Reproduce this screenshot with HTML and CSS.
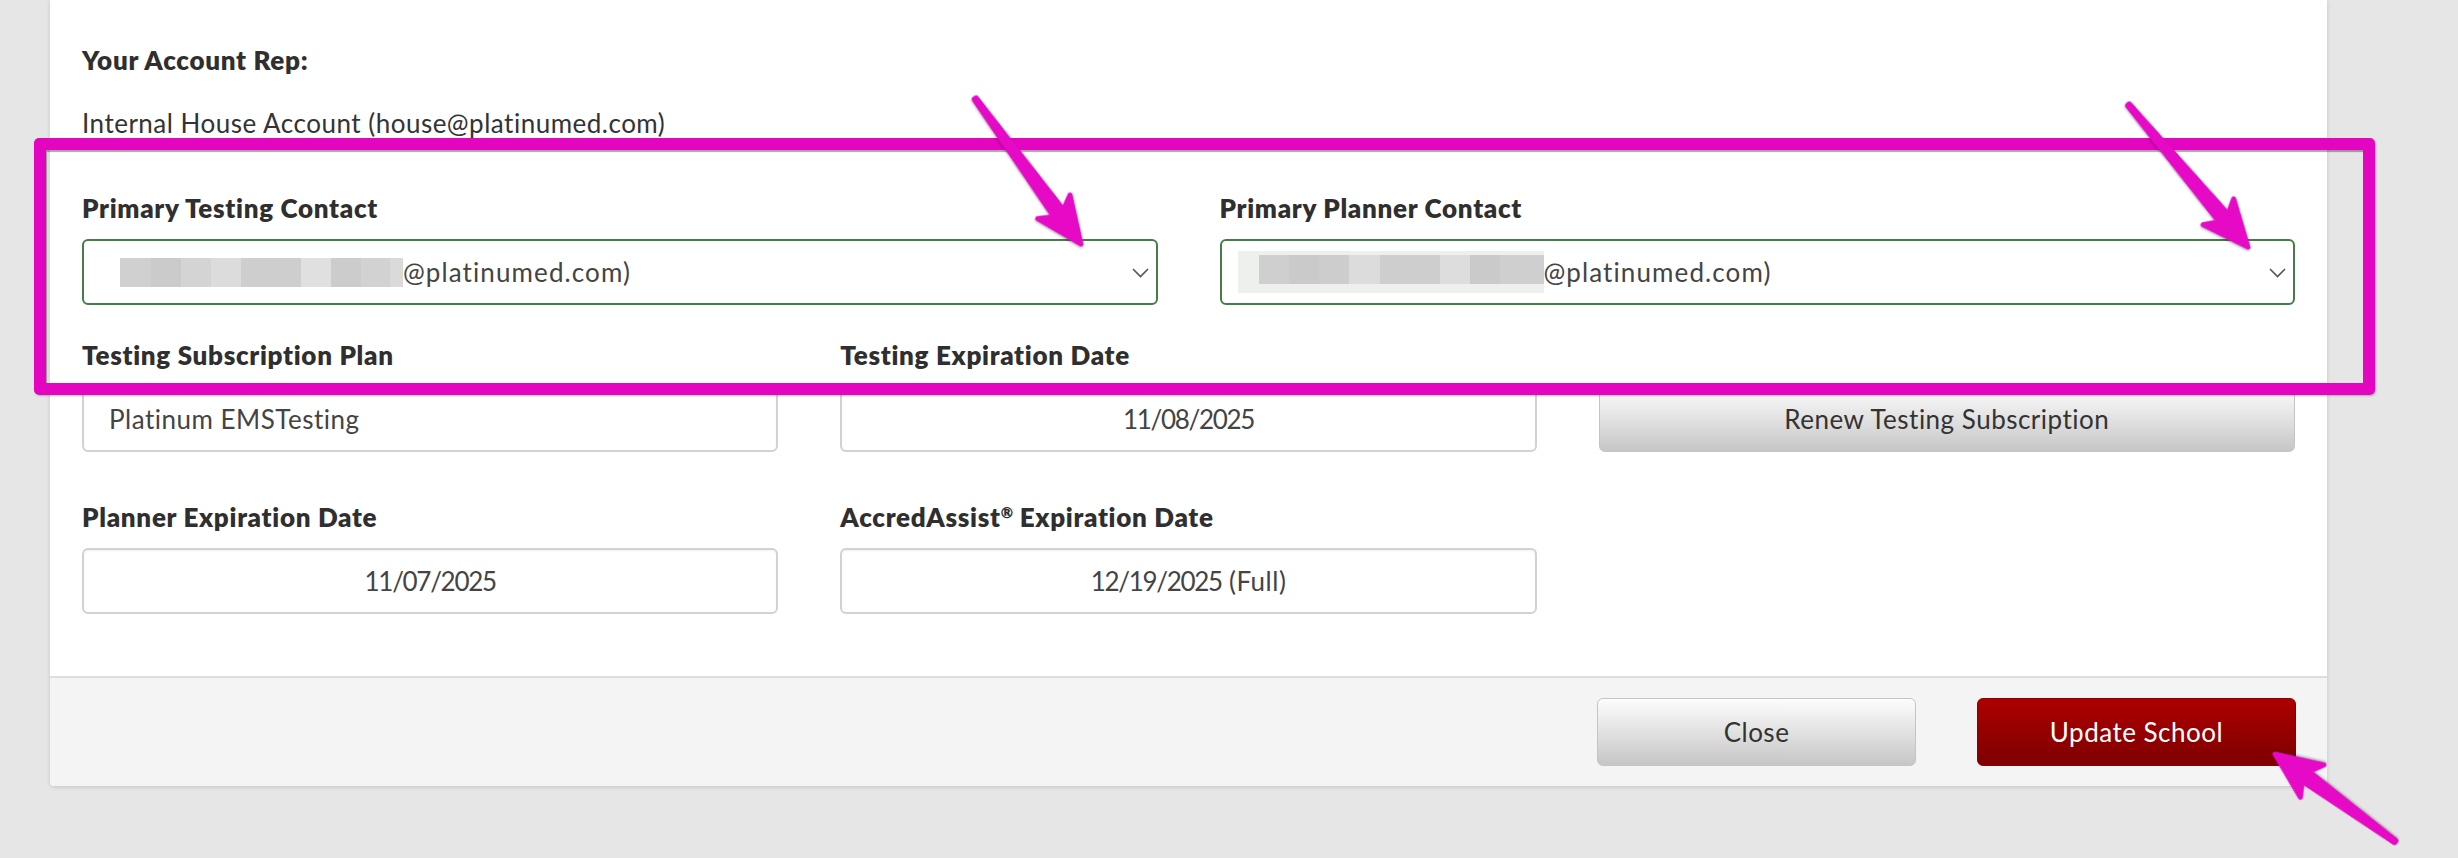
FILE: index.html
```html
<!DOCTYPE html>
<html lang="en">
  <head>
    <meta charset="UTF-8" />
    <meta name="viewport" content="width=device-width, initial-scale=1.0" />
    <title>Edit School</title>
    <link rel="stylesheet" href="styles.css">
  </head>
  <body>
    <div class="page">
      <div class="card">
        <div class="card-body">
          <p class="rep-label">Your Account Rep:</p>
          <p class="rep-value">Internal House Account (house@platinumed.com)</p>

          <!-- Contacts -->
          <div class="row row-contacts">
            <div class="field">
              <label>Primary Testing Contact</label>
              <div class="select">
                <span class="redact redact-a"></span>
                <span class="select-text">@platinumed.com)</span>
                <svg class="chevron" width="17" height="10" viewBox="0 0 17 10">
                  <polyline points="1,1 8.5,8.5 16,1" />
                </svg>
              </div>
            </div>
            <div class="field">
              <label>Primary Planner Contact</label>
              <div class="select">
                <span class="redact-wrap"><span class="redact redact-b"></span></span>
                <span class="select-text">@platinumed.com)</span>
                <svg class="chevron" width="17" height="10" viewBox="0 0 17 10">
                  <polyline points="1,1 8.5,8.5 16,1" />
                </svg>
              </div>
            </div>
          </div>

          <!-- Subscriptions -->
          <div class="row row-dates">
            <div class="field">
              <label>Testing Subscription Plan</label>
              <div class="input">Platinum EMSTesting</div>
            </div>
            <div class="field">
              <label>Testing Expiration Date</label>
              <div class="input center"><span class="date">11/08/2025</span></div>
            </div>
            <div class="field action">
              <button class="btn btn-grey">Renew Testing Subscription</button>
            </div>
          </div>

          <div class="row row-last">
            <div class="field">
              <label>Planner Expiration Date</label>
              <div class="input center"><span class="date">11/07/2025</span></div>
            </div>
            <div class="field">
              <label>AccredAssist<sup class="reg">&reg;</sup> Expiration Date</label>
              <div class="input center"><span class="date">12/19/2025</span>&nbsp;(Full)</div>
            </div>
          </div>
        </div>

        <div class="card-footer">
          <button class="btn btn-grey btn-footer">Close</button>
          <button class="btn btn-red btn-footer">Update School</button>
        </div>
      </div>

      <!-- Screenshot annotations -->
      <div class="highlight"></div>
      <svg class="arrows" width="2458" height="858" viewBox="0 0 2458 858">
        <g transform="translate(1081 244) rotate(53.95)">
          <path class="arrow" d="M0 0 L-46 20 L-38 6 L-180 1.2 L-180 -1.2 L-38 -6 L-46 -20 Z" />
        </g>
        <g transform="translate(2248 247) rotate(49.96)">
          <path class="arrow" d="M0 0 L-46 20 L-38 6 L-186 1.2 L-186 -1.2 L-38 -6 L-46 -20 Z" />
        </g>
        <g transform="translate(2275 754) rotate(216.1)">
          <path class="arrow" d="M0 0 L-46 20 L-38 6 L-149 1.2 L-149 -1.2 L-38 -6 L-46 -20 Z" />
        </g>
      </svg>
    </div>
  </body>
</html>
```

FILE: styles.css
```css
body {
  margin: 0;
  background-color: #e6e6e6;
  font-family: Lato, "Liberation Sans", sans-serif;
  font-size: 26px;
  letter-spacing: 0.5px;
  color: #444;
  height: 858px;
  overflow: hidden;
}

.page {
  position: relative;
  padding-left: 50px;
  height: 858px;
}

.card {
  width: 2277px;
  background-color: white;
  box-shadow: 0 1px 4px rgba(0, 0, 0, 0.15);
  border-radius: 0 0 4px 4px;
}

.card-body {
  padding: 45px 32px 62px 32px;
}

.rep-label {
  margin: 0 0 33px 0;
  font-weight: 800;
  letter-spacing: 0.7px;
  line-height: 30px;
  color: #2f2f2f;
}

.rep-value {
  margin: 0 0 55px 0;
  line-height: 30px;
  color: #333;
}

.row {
  display: grid;
  column-gap: 62px;
}

.row-contacts {
  grid-template-columns: 1fr 1fr;
  margin-bottom: 35px;
}

.row-dates {
  grid-template-columns: repeat(3, 1fr);
  margin-bottom: 50px;
}

.row-last {
  grid-template-columns: repeat(3, 1fr);
}

.field {
  display: flex;
  flex-direction: column;
}

.field label {
  display: block;
  font-weight: 800;
  letter-spacing: 0.7px;
  line-height: 30px;
  margin-bottom: 16px;
  color: #2f2f2f;
}

.reg {
  font-size: 15px;
  line-height: 0;
  letter-spacing: 0;
  vertical-align: 9px;
}

.field.action {
  justify-content: flex-end;
}

.select {
  box-sizing: border-box;
  height: 66px;
  display: flex;
  align-items: center;
  padding: 0 7px 0 16px;
  border: 2px solid #447d47;
  border-radius: 6px;
  background-color: white;
  line-height: 30px;
}

.select-text {
  color: #444;
  letter-spacing: 1.1px;
}

.chevron {
  margin-left: auto;
  margin-top: 1px;
}

.chevron polyline {
  fill: none;
  stroke: #555;
  stroke-width: 1.6;
}

.redact {
  display: inline-block;
  height: 29px;
}

.redact-a {
  width: 283px;
  margin-left: 20px;
  background: linear-gradient(90deg,
    #d0d0d0 0 31px, #cbcbcb 31px 61px, #d4d4d4 61px 91px,
    #dcdcdc 91px 121px, #cecece 121px 181px, #e0e0e0 181px 211px,
    #cccccc 211px 241px, #d2d2d2 241px 270px, #dadada 270px);
}

.redact-wrap {
  display: inline-block;
  width: 285px;
  height: 29px;
  padding: 4px 0 9px 21px;
  background-color: #eef0ee;
}

.redact-b {
  width: 285px;
  background: linear-gradient(90deg,
    #cfcfcf 0 30px, #cacaca 30px 60px, #cdcdcd 60px 90px,
    #dcdcdc 90px 121px, #cecece 121px 181px, #dddddd 181px 211px,
    #cacaca 211px 241px, #cfcfcf 241px);
}

.input {
  box-sizing: border-box;
  height: 66px;
  display: flex;
  align-items: center;
  padding: 0 25px;
  border: 2px solid #d2d2d2;
  border-radius: 6px;
  box-shadow: inset 0 1px 2px rgba(0, 0, 0, 0.06);
  line-height: 30px;
  color: #444;
}

.input.center {
  justify-content: center;
}

.date {
  letter-spacing: -1.3px;
}

.btn {
  box-sizing: border-box;
  height: 66px;
  font-family: inherit;
  font-size: 26px;
  letter-spacing: 0.5px;
  border-radius: 6px;
  cursor: pointer;
}

.btn-grey {
  color: #333;
  border: 1px solid #c4c4c4;
  background: linear-gradient(#fdfdfd, #c6c6c6);
}

.btn-red {
  color: white;
  border: 1px solid #8a0000;
  background: linear-gradient(#ad0000, #7e0000);
}

.card-footer {
  display: flex;
  justify-content: flex-end;
  gap: 61px;
  padding: 20px 31px;
  background-color: #f4f4f4;
  border-top: 2px solid #dedede;
  border-radius: 0 0 4px 4px;
}

.btn-footer {
  width: 319px;
  height: 68px;
}

/* annotations drawn over the screenshot */
.highlight {
  position: absolute;
  left: 34px;
  top: 138px;
  width: 2341px;
  height: 257px;
  box-sizing: border-box;
  border: 12px solid #e305c0;
  border-radius: 5px;
  box-shadow: 1px 1px 2px rgba(0, 0, 0, 0.25), inset 1px 2px 1px rgba(0, 0, 0, 0.35);
}

.arrows {
  position: absolute;
  left: 0;
  top: 0;
  pointer-events: none;
}

.arrow {
  fill: #e60ac6;
  stroke: #e60ac6;
  stroke-width: 5;
  stroke-linejoin: round;
  filter: drop-shadow(1px 1px 1px rgba(0, 0, 0, 0.3));
}
```
